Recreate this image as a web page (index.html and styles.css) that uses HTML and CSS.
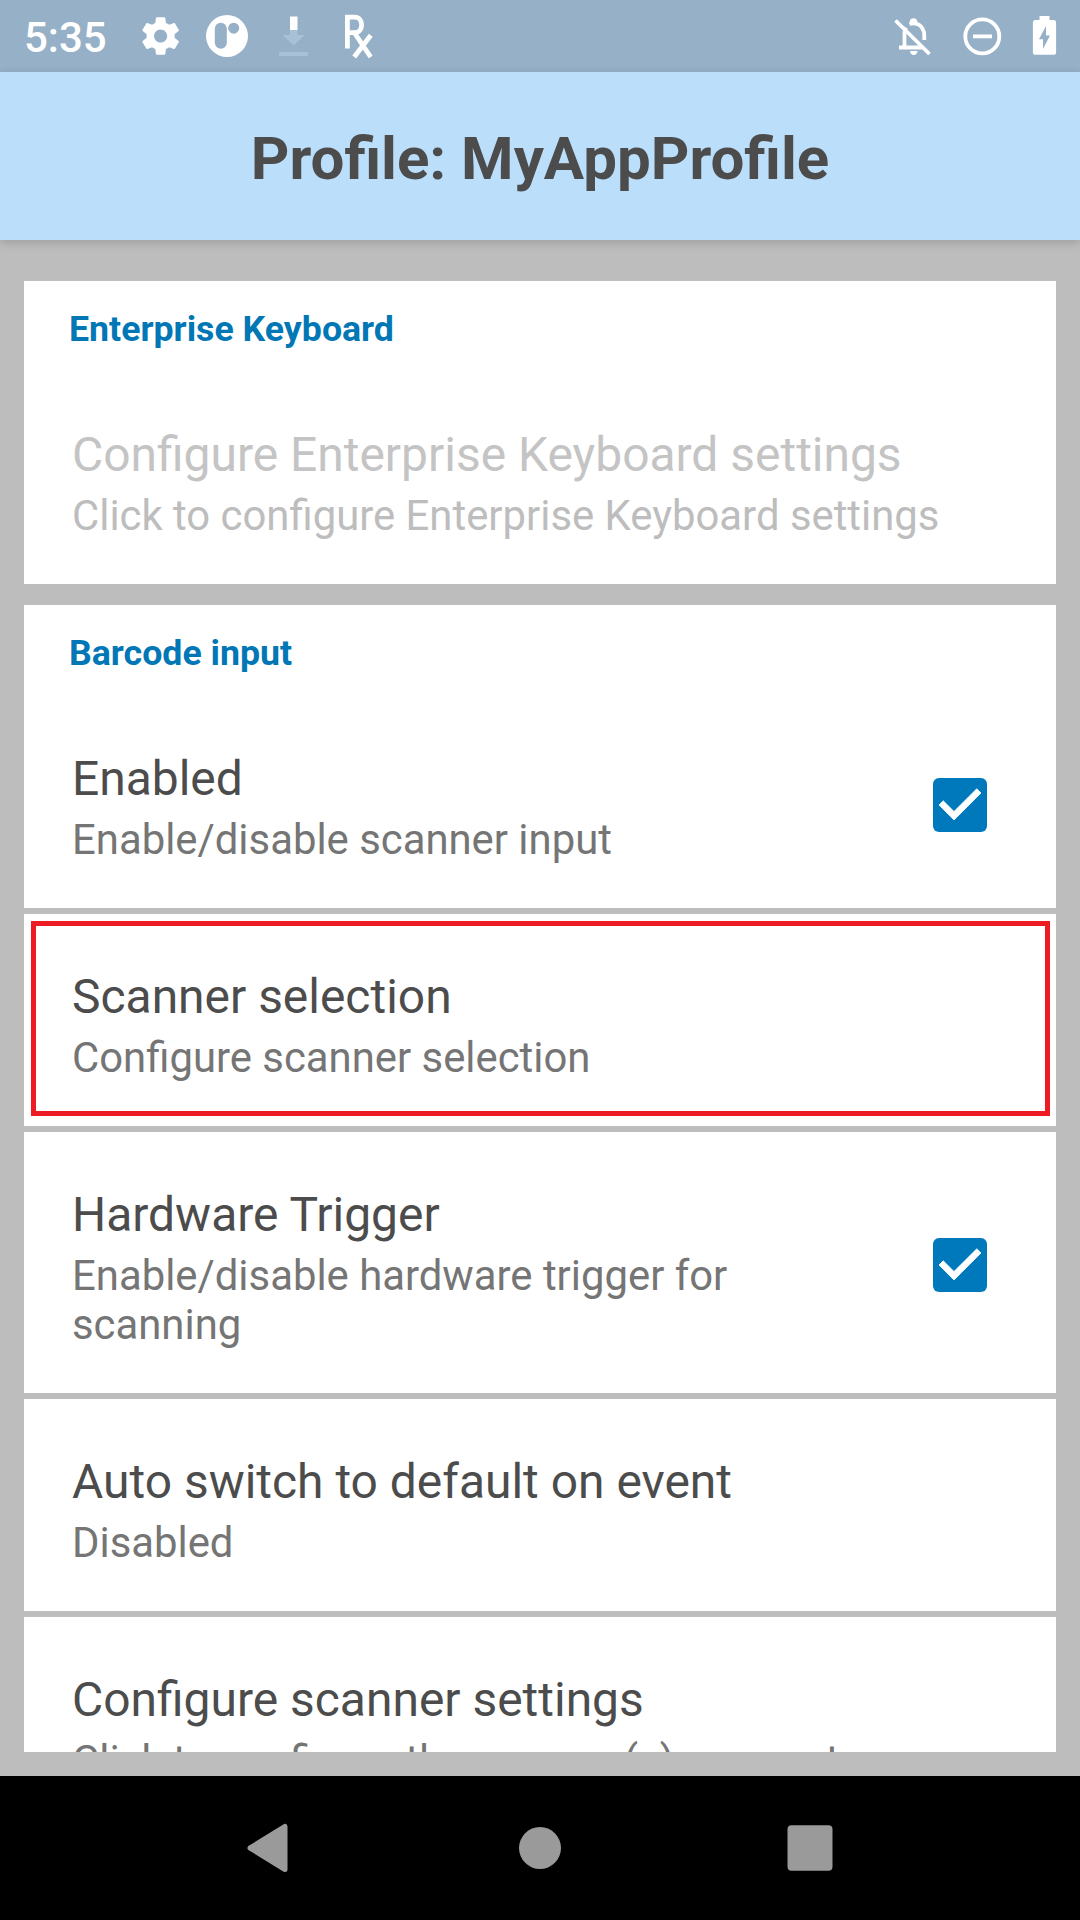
FILE: index.html
```html
<!DOCTYPE html>
<html lang="en">
<head>
<meta charset="utf-8">
<title>Profile: MyAppProfile</title>
<link rel="stylesheet" href="styles.css">
</head>
<body>
<div class="screen">
  <div class="status-bar">
    <span class="clock">5:35</span>
    <div class="status-left">
      <svg class="icon" viewBox="1.2 -6.8 25.6 38.4" width="48" height="72" fill="#fff"><path transform="translate(1.8 .4)" d="M19.43 12.98c.04-.32.07-.64.07-.98s-.03-.66-.07-.98l2.11-1.65c.19-.15.24-.42.12-.64l-2-3.46c-.12-.22-.39-.3-.61-.22l-2.49 1c-.52-.4-1.08-.73-1.69-.98l-.38-2.65C14.46 2.18 14.25 2 14 2h-4c-.25 0-.46.18-.49.42l-.38 2.65c-.61.25-1.17.59-1.69.98l-2.49-1c-.23-.09-.49 0-.61.22l-2 3.46c-.13.22-.07.49.12.64l2.11 1.65c-.04.32-.07.65-.07.98s.03.66.07.98l-2.11 1.65c-.19.15-.24.42-.12.64l2 3.46c.12.22.39.3.61.22l2.49-1c.52.4 1.08.73 1.69.98l.38 2.65c.03.24.24.42.49.42h4c.25 0 .46-.18.49-.42l.38-2.65c.61-.25 1.17-.59 1.69-.98l2.49 1c.23.09.49 0 .61-.22l2-3.46c.12-.22.07-.49-.12-.64l-2.11-1.65zM12 15.5c-1.93 0-3.5-1.57-3.5-3.5s1.57-3.5 3.5-3.5 3.5 1.57 3.5 3.5-1.57 3.5-3.5 3.5z"/></svg>
      <svg class="icon" viewBox="203 0 48 72" width="48" height="72"><circle cx="227" cy="36" r="21" fill="#fff"/><rect x="214.8" y="22.8" width="12" height="26" rx="6" fill="#95b0c7"/><circle cx="233.7" cy="28.2" r="5.5" fill="#95b0c7"/></svg>
      <svg class="icon" viewBox="269 0 48 72" width="48" height="72"><path d="M290 30h7.5v5h7.2l-11 10.5-11-10.5h7.3zM279 52h29v4h-29z" fill="#a9c1d6"/><path d="M290 16.500h7.500v13.500h-7.500z" fill="#fff"/></svg>
      <svg class="icon" viewBox="335 0 48 72" width="48" height="72" fill="none" stroke="#fff" stroke-width="4.800"><path d="M347.400 48.500V17.200h7.100c9.500 0 9.500 15.500 0 15.500H347M354.500 33l16.200 24M370.800 35.200L354.200 57"/></svg>
    </div>
    <div class="status-right">
      <svg class="icon" viewBox="892 0 42 72" width="42" height="72" fill="none" stroke="#fff" stroke-width="3.800"><path d="M895.500 20.500l34 33.500"/><path d="M899 47.500h24M904.500 47V33.500q0-3.500 1.500-6M909.500 24q11-3 14.500 8 .3 2 .3 8"/><path d="M910.500 24v-2a3 3 0 0 1 6 0v2" fill="#fff" stroke-width="1.500"/><path d="M910 51h7.500q-.5 4-3.750 4t-3.750-4z" fill="#fff" stroke="none"/></svg>
      <svg class="icon" viewBox="961 0 42 72" width="42" height="72" fill="none" stroke="#fff" stroke-width="3.800"><circle cx="982.300" cy="36.400" r="17"/><path d="M973 36.400h19"/></svg>
      <svg class="icon" viewBox="1030 0 30 72" width="30" height="72"><path d="M1039.500 16h10v4h4a2.600 2.600 0 0 1 2.600 2.600v29.600a2.600 2.600 0 0 1-2.600 2.600h-18a2.600 2.600 0 0 1-2.600-2.600V22.600a2.600 2.600 0 0 1 2.600-2.600h4z" fill="#fff"/><path d="M1046 26v9.500h4L1043 49v-9.700h-4z" fill="#95b0c7"/></svg>
    </div>
  </div>
  <header class="app-bar"><h1 class="app-title">Profile: MyAppProfile</h1></header>
  <main class="content">
    <section class="group">
      <div class="card">
        <h2 class="group-title">Enterprise Keyboard</h2>
        <div class="row disabled"><div class="texts wide"><div class="title">Configure Enterprise Keyboard settings</div><div class="summary">Click to configure Enterprise Keyboard settings</div></div></div>
      </div>
    </section>
    <section class="group">
      <div class="card">
        <h2 class="group-title">Barcode input</h2>
        <div class="row">
          <div class="texts"><div class="title">Enabled</div><div class="summary">Enable/disable scanner input</div></div>
          <svg class="checkbox" viewBox="0 0 24 24"><rect x="3" y="3" width="18" height="18" rx="2" fill="#0079bc"/><path d="M10 17l-5-5 1.410-1.410L10 14.170l7.590-7.590L19 8z" fill="#fff" stroke="#fff" stroke-width=".25"/></svg>
        </div>
      </div>
      <div class="card">
        <div class="row highlighted"><div class="texts"><div class="title">Scanner selection</div><div class="summary">Configure scanner selection</div></div></div>
      </div>
      <div class="card">
        <div class="row">
          <div class="texts"><div class="title">Hardware Trigger</div><div class="summary">Enable/disable hardware trigger for scanning</div></div>
          <svg class="checkbox" viewBox="0 0 24 24"><rect x="3" y="3" width="18" height="18" rx="2" fill="#0079bc"/><path d="M10 17l-5-5 1.410-1.410L10 14.170l7.590-7.590L19 8z" fill="#fff" stroke="#fff" stroke-width=".25"/></svg>
        </div>
      </div>
      <div class="card">
        <div class="row"><div class="texts"><div class="title">Auto switch to default on event</div><div class="summary">Disabled</div></div></div>
      </div>
      <div class="card">
        <div class="row"><div class="texts wide"><div class="title">Configure scanner settings</div><div class="summary">Click to configure the scanner(s) parameters</div></div></div>
      </div>
    </section>
  </main>
  <nav class="nav-bar">
    <svg class="nav-icon" viewBox="0 0 60 60"><path d="M8.500 30L43.500 8.500V51.500z" transform="translate(1.500 0)" fill="#9a9a9a" stroke="#9a9a9a" stroke-width="5" stroke-linejoin="round"/></svg>
    <svg class="nav-icon" viewBox="0 0 60 60"><circle cx="30" cy="30" r="21" fill="#9a9a9a"/></svg>
    <svg class="nav-icon" viewBox="0 0 60 60"><rect x="7.500" y="7.300" width="45" height="45.400" rx="4" fill="#9a9a9a"/></svg>
  </nav>
</div>
</body>
</html>
```
FILE: styles.css
```css
* { box-sizing: border-box; }
body { margin: 0; font-family: Roboto, "Liberation Sans", sans-serif; }
h1, h2 { margin: 0; }
.screen {
  width: 1080px;
  height: 1920px;
  display: flex;
  flex-direction: column;
  overflow: hidden;
  background: #bdbdbd;
}
.status-bar {
  flex: none;
  height: 72px;
  display: flex;
  align-items: center;
  padding: 0 20px 0 24px;
  background: #95b0c7;
}
.icon { display: block; }
.clock {
  width: 113px;
  font-size: 42px;
  font-weight: 500;
  line-height: 49px;
  padding-top: 3px;
  color: #fff;
}
.status-left { display: flex; gap: 18px; }
.status-right { display: flex; gap: 27px; margin-left: auto; }
.app-bar {
  flex: none;
  height: 168px;
  display: flex;
  align-items: center;
  justify-content: center;
  padding-top: 6px;
  background: #bbdefb;
  box-shadow: 0 3px 9px rgba(0, 0, 0, .16);
}
.app-title {
  font-size: 60px;
  font-weight: 700;
  line-height: 70px;
  color: #4c4c4c;
  font-variant-ligatures: common-ligatures;
}
.content {
  flex: none;
  height: 1512px;
  margin: 0 24px 24px;
  padding-top: 41px;
  display: flex;
  flex-direction: column;
  gap: 21px;
  overflow: hidden;
}
.group { flex: none; display: flex; flex-direction: column; gap: 6px; }
.card { background: #fff; }
.group-title {
  height: 91px;
  padding: 27px 45px 0;
  font-size: 35.7px;
  font-weight: 700;
  line-height: 42px;
  color: #0277b5;
}
.row {
  position: relative;
  display: flex;
  align-items: center;
  justify-content: space-between;
  padding: 51px 60px 44px 48px;
}
.texts { max-width: 740px; }
.texts.wide { max-width: none; white-space: nowrap; }
.title { font-size: 47.950px; line-height: 64px; color: #4c4c4c; }
.summary { margin-top: 4px; font-size: 41.850px; line-height: 49px; color: #757575; }
.disabled .title { color: #c4c4c4; }
.disabled .summary { color: #bdbdbd; }
.checkbox { width: 72px; height: 72px; margin-bottom: 2px; }
.highlighted::after {
  content: "";
  position: absolute;
  inset: 7px 6px 10px 7px;
  border: 5px solid #ed1c24;
}
.nav-bar {
  flex: none;
  height: 144px;
  display: grid;
  grid-template-columns: repeat(3, 270px);
  justify-content: center;
  align-items: center;
  justify-items: center;
  background: #000;
}
.nav-icon { width: 60px; height: 60px; }
```
